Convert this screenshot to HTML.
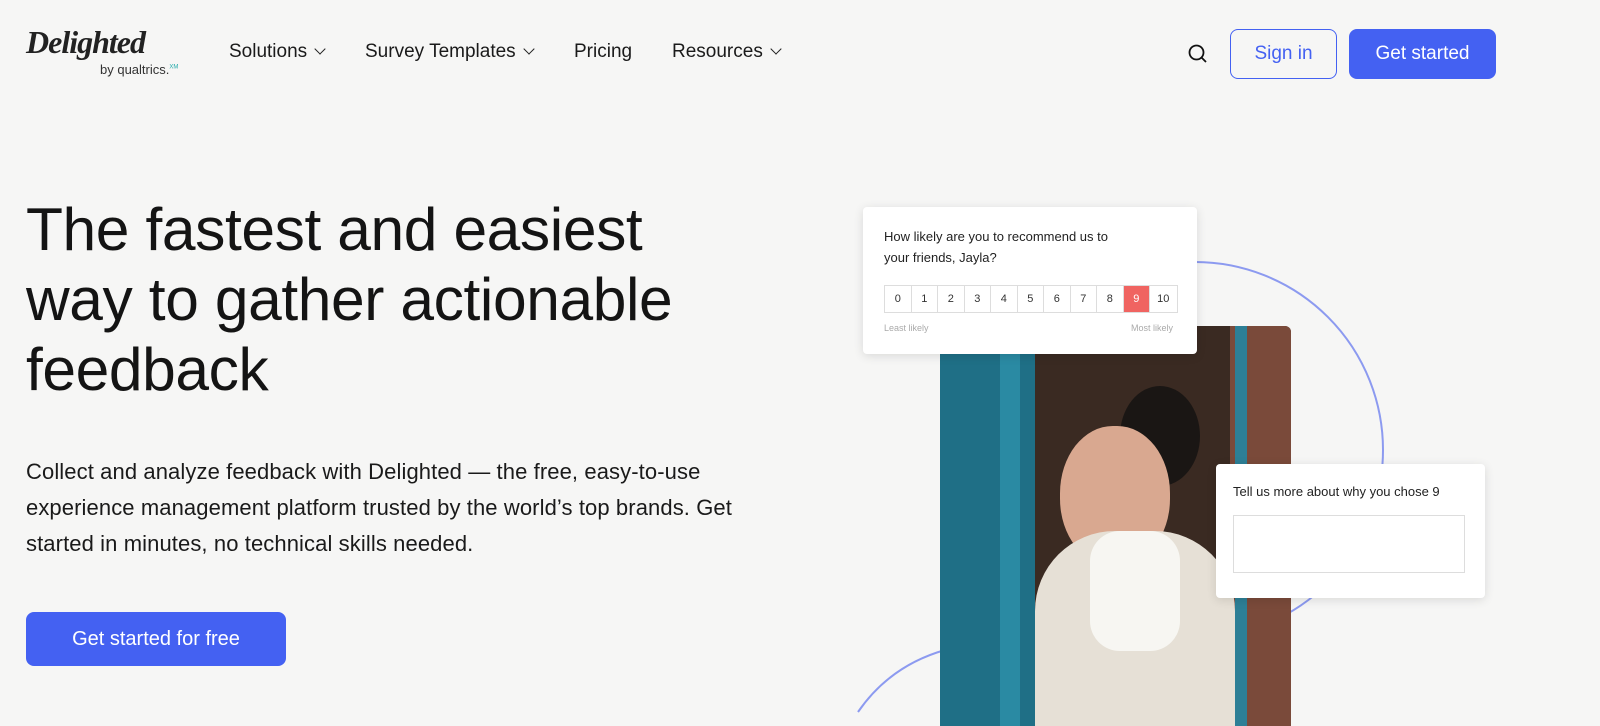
<!DOCTYPE html>
<html><head><meta charset="utf-8"><style>
*{margin:0;padding:0;box-sizing:border-box}
body{width:1600px;height:726px;overflow:hidden;background:#f6f6f5;font-family:"Liberation Sans",sans-serif;color:#141414;position:relative}
.abs{position:absolute}
.nav{font-size:19px;top:41px;color:#1a1a1a}
.chev{display:inline-block;width:8px;height:8px;border-right:1.5px solid #222;border-bottom:1.5px solid #222;transform:rotate(45deg);margin-left:9px;position:relative;top:-4px}
h1{position:absolute;left:26px;top:194px;font-size:60.5px;font-weight:400;line-height:70px;letter-spacing:-0.4px}
.p{left:26px;top:454px;font-size:22px;line-height:36px;width:760px;color:#1a1a1a;letter-spacing:0.1px}
.btn{background:#4461f2;color:#fff;border-radius:8px;text-align:center}
.card{background:#fff;border-radius:4px;box-shadow:0 2px 10px rgba(0,0,0,.12)}
.sc{display:flex;position:absolute;left:21px;top:78px;border:1px solid #ddd}
.sc div{width:26.5px;height:26px;border-right:1px solid #ddd;font-size:11px;text-align:center;line-height:26px;color:#333}
.sc div:last-child{border-right:none}
</style></head><body>
<div class="abs" style="left:26px;top:24px;font-family:'Liberation Serif',serif;font-style:italic;font-weight:bold;font-size:32px;letter-spacing:-1px;color:#222">Delighted</div>
<div class="abs" style="left:100px;top:62px;font-size:13px;color:#333">by qualtrics.<sup style="font-size:6px;color:#2aa">XM</sup></div>
<div class="abs nav" style="left:229px">Solutions<span class="chev"></span></div>
<div class="abs nav" style="left:365px">Survey Templates<span class="chev"></span></div>
<div class="abs nav" style="left:574px">Pricing</div>
<div class="abs nav" style="left:672px">Resources<span class="chev"></span></div>
<svg class="abs" style="left:1187px;top:43px" width="22" height="22" viewBox="0 0 22 22"><circle cx="9.5" cy="9.5" r="7" fill="none" stroke="#111" stroke-width="1.8"/><path d="M14.5 14.5L19 19" stroke="#111" stroke-width="1.8"/></svg>
<div class="abs" style="left:1230px;top:29px;width:107px;height:50px;border:1.5px solid #4461f2;border-radius:8px;color:#4461f2;font-size:19px;text-align:center;line-height:47px">Sign in</div>
<div class="abs btn" style="left:1349px;top:29px;width:147px;height:50px;font-size:19px;line-height:50px">Get started</div>
<h1>The fastest and easiest<br>way to gather actionable<br>feedback</h1>
<div class="abs p">Collect and analyze feedback with Delighted — the free, easy-to-use<br>experience management platform trusted by the world’s top brands. Get<br>started in minutes, no technical skills needed.</div>
<div class="abs btn" style="left:26px;top:612px;width:260px;height:54px;font-size:20px;line-height:54px">Get started for free</div>
<svg class="abs" style="left:0;top:0" width="1600" height="726"><circle cx="1195" cy="450" r="188" fill="none" stroke="#8c9af0" stroke-width="2"/><path d="M858 712 C880 680 910 660 945 650" fill="none" stroke="#8c9af0" stroke-width="2"/></svg>
<div class="abs" style="left:940px;top:326px;width:351px;height:400px;border-radius:6px 6px 0 0;overflow:hidden;background:#3a2a22">
<div class="abs" style="left:0;top:0;width:95px;height:400px;background:#1f6f86"></div>
<div class="abs" style="left:60px;top:0;width:20px;height:400px;background:#2a8aa3"></div>
<div class="abs" style="left:290px;top:0;width:61px;height:400px;background:#7a4a3a"></div>
<div class="abs" style="left:295px;top:0;width:12px;height:400px;background:#2d7f96"></div>
<div class="abs" style="left:180px;top:60px;width:80px;height:100px;border-radius:50%;background:#1a1614"></div>
<div class="abs" style="left:120px;top:100px;width:110px;height:140px;border-radius:48%;background:#d9a890"></div>
<div class="abs" style="left:95px;top:205px;width:200px;height:200px;border-radius:80px 80px 0 0;background:#e6e0d6"></div>
<div class="abs" style="left:150px;top:205px;width:90px;height:120px;border-radius:30px;background:#f7f6f2"></div>
</div>
<div class="abs card" style="left:863px;top:207px;width:334px;height:147px">
<div class="abs" style="left:21px;top:19px;font-size:13px;line-height:21px;color:#222">How likely are you to recommend us to<br>your friends, Jayla?</div>
<div class="sc"><div>0</div><div>1</div><div>2</div><div>3</div><div>4</div><div>5</div><div>6</div><div>7</div><div>8</div><div style="background:#f06461;color:#fff">9</div><div>10</div></div>
<div class="abs" style="left:21px;top:116px;font-size:9px;color:#aaa">Least likely</div>
<div class="abs" style="right:24px;top:116px;font-size:9px;color:#aaa">Most likely</div>
</div>
<div class="abs card" style="left:1216px;top:464px;width:269px;height:134px">
<div class="abs" style="left:17px;top:20px;font-size:13px;color:#222">Tell us more about why you chose 9</div>
<div class="abs" style="left:17px;top:51px;width:232px;height:58px;border:1px solid #ddd"></div>
</div>
</body></html>
